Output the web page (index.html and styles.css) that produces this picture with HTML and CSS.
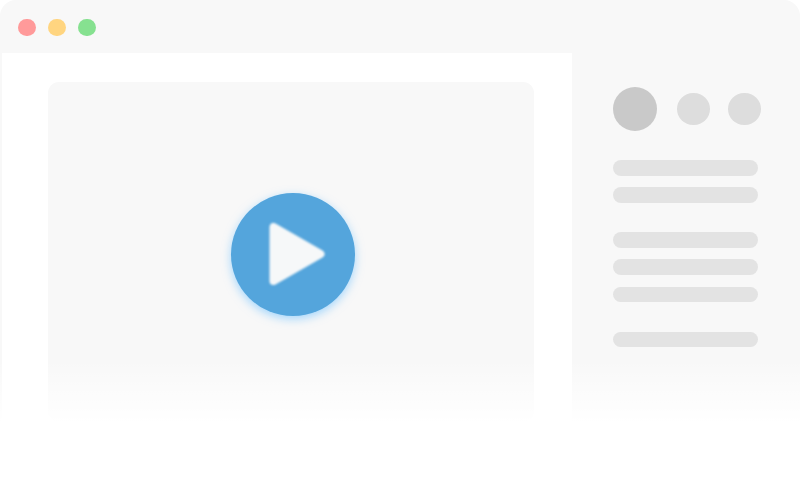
FILE: index.html
```html
<!DOCTYPE html>
<html lang="en">
<head>
<meta charset="utf-8">
<title>Video preview</title>
<link rel="stylesheet" href="styles.css">
</head>
<body>
<div class="window">
  <header class="titlebar">
    <span class="dot dot-red"></span>
    <span class="dot dot-yellow"></span>
    <span class="dot dot-green"></span>
  </header>
  <div class="content">
    <main class="main">
      <div class="video">
        <div class="play">
          <svg class="play-icon" viewBox="0 0 60 68" width="60" height="68" aria-hidden="true">
            <path d="M6.5 7 L6.5 61 L53.5 34 Z"/>
          </svg>
        </div>
      </div>
    </main>
    <aside class="side">
      <div class="avatars">
        <span class="avatar avatar-large"></span>
        <span class="avatar avatar-small"></span>
        <span class="avatar avatar-small"></span>
      </div>
      <div class="bars">
        <span class="bar"></span>
        <span class="bar"></span>
      </div>
      <div class="bars">
        <span class="bar"></span>
        <span class="bar"></span>
        <span class="bar"></span>
      </div>
      <div class="bars">
        <span class="bar"></span>
      </div>
    </aside>
  </div>
  <div class="fade"></div>
</div>
</body>
</html>
```
FILE: styles.css
```css
* { box-sizing: border-box; }

html, body {
  margin: 0;
  height: 100%;
  background: #fff;
  overflow: hidden;
}

.window {
  position: relative;
  width: 800px;
  height: 486px;
  display: flex;
  flex-direction: column;
  background: #f8f8f8;
  border-radius: 16px 16px 0 0;
  overflow: hidden;
}

.titlebar {
  flex: none;
  height: 53px;
  padding: 2px 0 0 18px;
  display: flex;
  align-items: center;
  gap: 12.5px;
}

.dot {
  width: 17.5px;
  height: 17.5px;
  border-radius: 50%;
  filter: blur(0.3px);
}
.dot-red { background: #ff9a9a; }
.dot-yellow { background: #ffd580; }
.dot-green { background: #86e190; }

.content {
  flex: 1;
  display: flex;
  min-height: 0;
}

.main {
  width: 570px;
  margin-left: 2px;
  padding: 29px 38px 0 46px;
  background: #fff;
}

.video {
  height: 340px;
  padding: 110.5px 0 0 4px;
  display: flex;
  justify-content: center;
  align-items: flex-start;
  background: #f8f8f8;
  border-radius: 11px;
}

.play {
  width: 124px;
  height: 123.5px;
  padding-left: 8px;
  display: flex;
  align-items: center;
  justify-content: center;
  border-radius: 50%;
  background: #54a5dc;
  box-shadow: 0 3px 10px rgba(95, 185, 255, 0.55);
  filter: blur(0.5px);
}

.play-icon {
  flex: none;
  fill: #f6f8f9;
  stroke: #f6f8f9;
  stroke-width: 8;
  stroke-linejoin: round;
  filter: blur(0.8px);
}

.side {
  flex: 1;
  padding: 33.5px 0 0 40.8px;
}

.avatars {
  width: 148px;
  display: flex;
  align-items: center;
  justify-content: space-between;
  margin-bottom: 29px;
}

.avatar {
  border-radius: 50%;
  filter: blur(0.3px);
}
.avatar-large {
  width: 44.5px;
  height: 44.5px;
  background: #c9c9c9;
  margin-right: 1px;
}
.avatar-small {
  width: 32.5px;
  height: 32.5px;
  background: #dddddd;
}

.bars {
  display: flex;
  flex-direction: column;
  gap: 11.7px;
  margin-bottom: 29.5px;
}

.bar {
  display: block;
  width: 145px;
  height: 15.5px;
  border-radius: 8px;
  background: #e3e3e3;
  filter: blur(0.3px);
}

.fade {
  position: absolute;
  left: 0;
  right: 0;
  top: 360px;
  bottom: 0;
  background: linear-gradient(to bottom, rgba(255,255,255,0) 0, #fff 62px);
  pointer-events: none;
}
```
